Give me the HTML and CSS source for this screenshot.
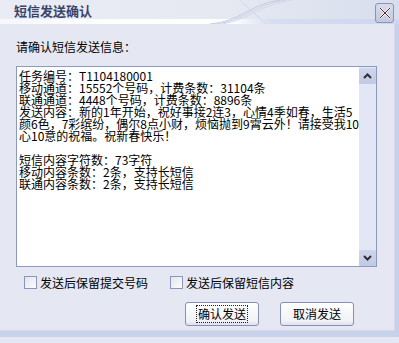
FILE: index.html
```html
<!DOCTYPE html>
<html>
<head>
  <title>短信发送确认</title>
  <link rel="stylesheet" href="styles.css">
</head>
<body>
  <div class="window">
    <div class="titlebar">
      <svg class="swoosh" width="120" height="24" viewBox="0 0 120 24">
        <path d="M10 24 C40 22 50 4 80 0" fill="none" stroke="#c3cbe0" stroke-width="1"/>
        <path d="M16 24 C44 21 56 4 86 0" fill="none" stroke="#ccd3e6" stroke-width="1"/>
        <path d="M22 24 C48 20 60 5 92 0" fill="none" stroke="#d3d9ea" stroke-width="1"/>
        <path d="M40 0 L66 24" fill="none" stroke="#cfd6e8" stroke-width="1"/>
      </svg>
      <span class="title">短信发送确认</span>
      <button class="close" type="button" aria-label="关闭">
        <svg width="12" height="12" viewBox="0 0 12 12">
          <path d="M1 1 L11 11 M11 1 L1 11" stroke="#f4f0f2" stroke-width="2.4"/>
          <path d="M1 1 L11 11 M11 1 L1 11" stroke="#5a2a32" stroke-width="1"/>
        </svg>
      </button>
    </div>
    <div class="titleband"></div>

    <div class="body">
      <div class="prompt">请确认短信发送信息：</div>

      <div class="memo">
        <div class="memo-text">任务编号：T1104180001
移动通道：15552个号码，计费条数：31104条
联通通道：4448个号码，计费条数：8896条
发送内容：新的1年开始，祝好事接2连3，心情4季如春，生活5
颜6色，7彩缤纷，偶尔8点小财，烦恼抛到9霄云外！请接受我10
心10意的祝福。祝新春快乐！

短信内容字符数：73字符
移动内容条数：2条，支持长短信
联通内容条数：2条，支持长短信</div>
        <div class="scrollbar">
          <div class="sb-btn">
            <svg width="9" height="6" viewBox="0 0 9 6"><path d="M1 5 L4.5 1.5 L8 5" fill="none" stroke="#2c2f3a" stroke-width="2"/></svg>
          </div>
          <div class="sb-track"></div>
          <div class="sb-btn">
            <svg width="9" height="6" viewBox="0 0 9 6"><path d="M1 1 L4.5 4.5 L8 1" fill="none" stroke="#2c2f3a" stroke-width="2"/></svg>
          </div>
        </div>
      </div>

      <div class="options">
        <label class="check"><span class="box"></span>发送后保留提交号码</label>
        <label class="check"><span class="box"></span>发送后保留短信内容</label>
      </div>

      <div class="actions">
        <button class="btn" type="button"><span class="focus">确认发送</span></button>
        <button class="btn" type="button">取消发送</button>
      </div>
    </div>
  </div>
</body>
</html>
```

FILE: styles.css
```css
html, body {
  margin: 0;
  padding: 0;
}
body {
  font-family: "Noto Sans CJK SC", "Liberation Sans", sans-serif;
  font-size: 12px;
  color: #000;
  background: #e5e8f2;
}
.window {
  width: 399px;
  height: 343px;
  box-sizing: border-box;
  background: #e5e8f2;
  position: relative;
  overflow: hidden;
}
.titlebar {
  height: 19px;
  display: flex;
  align-items: flex-start;
  position: relative;
  background: linear-gradient(to right, #e9ecf4 0%, #e6e9f2 55%, #d8deee 100%);
}
.swoosh {
  position: absolute;
  left: 200px;
  top: 0;
}
.title {
  position: relative;
  margin: 4px 0 0 14px;
  font-size: 13px;
  line-height: 13px;
  font-weight: bold;
  color: #3a4468;
}
.close {
  position: relative;
  margin: 3px 5px 0 auto;
  width: 19px;
  height: 20px;
  padding: 0;
  border: 1px solid #8c93b6;
  border-radius: 3px;
  background: linear-gradient(#d6dbeb, #c2c9e0);
  display: flex;
  align-items: center;
  justify-content: center;
  z-index: 1;
}
.titleband {
  height: 5px;
  background: linear-gradient(to right, #f6f7fb 0%, #ffffff 30%, #ffffff 58%, #d6def0 68%, #ccd6ee 100%);
}
.body {
  height: 313px;
  box-sizing: border-box;
  border-right: 4px solid #c7d1ea;
  border-bottom: 6px solid #c8d2ea;
  box-shadow: inset -1px -1px 0 #d3d9ea;
  padding: 17px 0 0 16px;
}
.prompt {
  line-height: 12px;
  height: 12px;
}
.memo {
  margin-top: 13px;
  width: 361px;
  height: 201px;
  box-sizing: border-box;
  border: 1px solid #8d9ac0;
  background: #fff;
  display: flex;
}
.memo-text {
  flex: 1;
  padding: 3px 0 0 2px;
  white-space: pre;
  line-height: 12px;
  overflow: hidden;
}
.scrollbar {
  width: 17px;
  display: flex;
  flex-direction: column;
  background: #e2e6f5;
  padding-top: 1px;
}
.sb-btn {
  height: 16px;
  background: linear-gradient(#cfd5eb, #c1c9e3);
  display: flex;
  align-items: center;
  justify-content: center;
  border-radius: 1px;
}
.sb-track {
  flex: 1;
}
.options {
  display: flex;
  margin: 9px 0 0 8px;
  height: 13px;
}
.check {
  display: flex;
  align-items: center;
  line-height: 13px;
  margin-right: 22px;
}
.box {
  width: 11px;
  height: 11px;
  border: 1px solid #8d95bd;
  background: linear-gradient(135deg, #e3e6f0, #fbfbfd);
  margin-right: 3px;
}
.actions {
  display: flex;
  margin: 13px 0 0 169px;
  gap: 21px;
}
.btn {
  width: 74px;
  height: 24px;
  padding: 0;
  border: 1px solid #8690b6;
  border-radius: 3px;
  background: linear-gradient(#ffffff, #f1f2f6 80%, #dfe2ec);
  font-family: inherit;
  font-size: 12px;
  color: #000;
  line-height: 12px;
}
.focus {
  display: inline-block;
  padding: 2px 1px;
  outline: 1px dotted #222;
}
```
